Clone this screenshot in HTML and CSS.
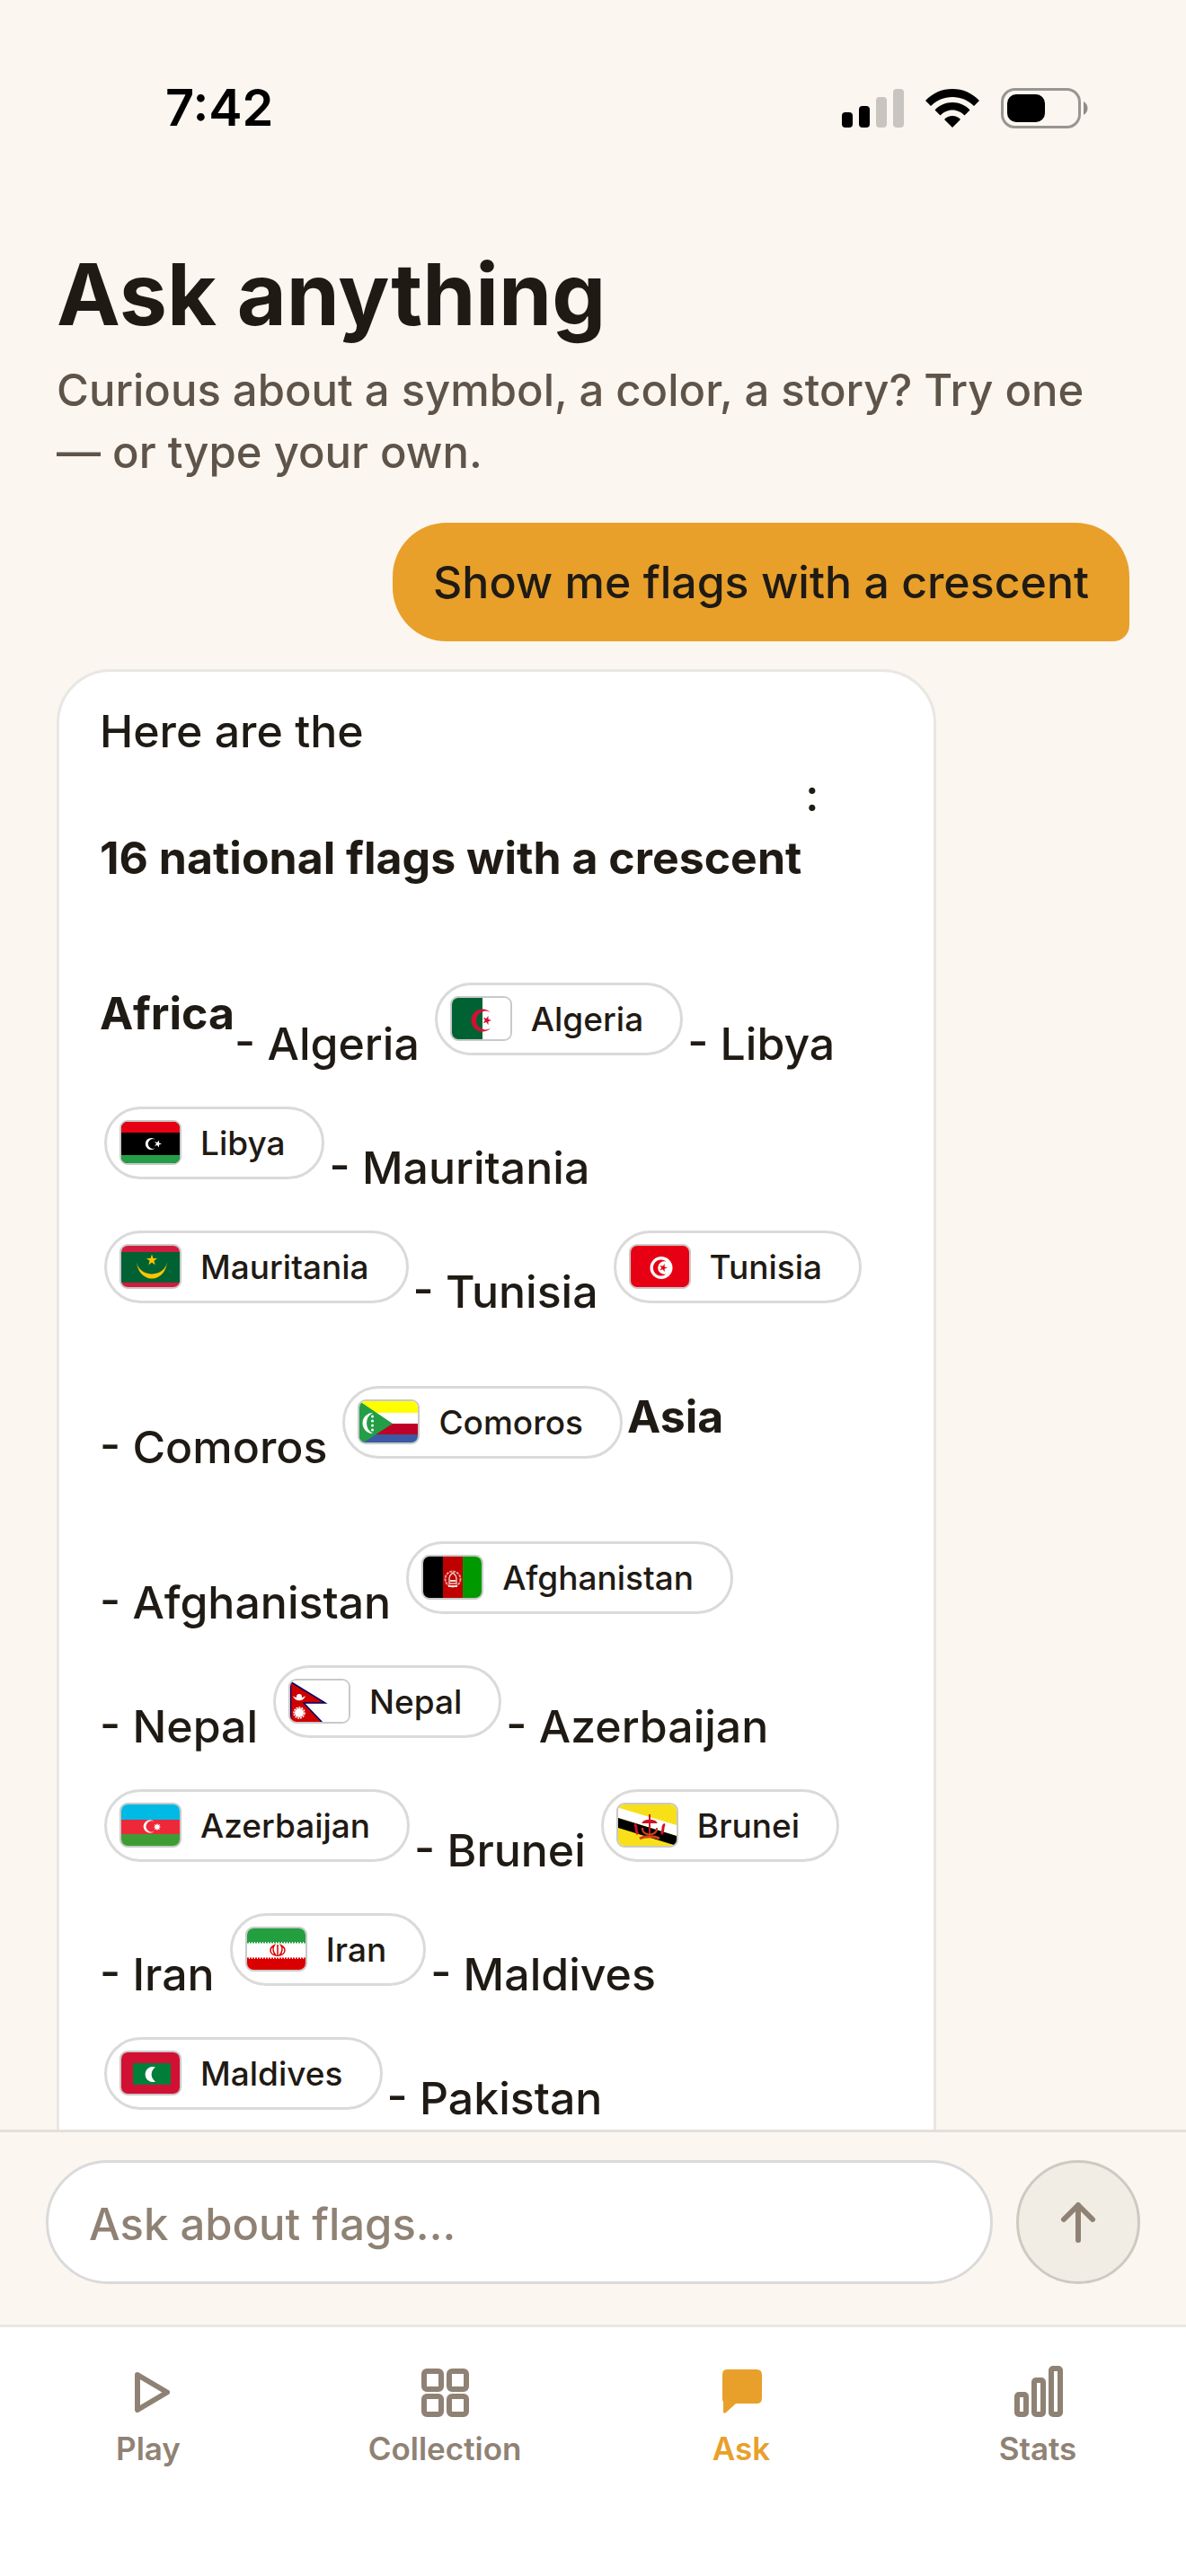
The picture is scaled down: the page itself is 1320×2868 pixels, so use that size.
FILE: index.html
```html
<!DOCTYPE html>
<html lang="en">
<head>
    <meta charset="UTF-8">
    <meta name="viewport" content="width=device-width, initial-scale=1.0">
    <title>Ask anything</title>
    <link rel="stylesheet" href="styles.css">
</head>
<body>

<div class="status-bar">
    <span class="time">7:42</span>
    <div class="status-icons">
        <svg width="69" height="44" viewBox="0 0 69 44">
            <rect x="0" y="26" width="12" height="17" rx="4"/>
            <rect x="19" y="19" width="12" height="24" rx="4"/>
            <rect x="38" y="9" width="12" height="34" rx="4" opacity="0.2"/>
            <rect x="57" y="0" width="12" height="43" rx="4" opacity="0.2"/>
        </svg>
        <svg width="60" height="44" viewBox="0 0 60 44">
            <path d="M30 0C18.500 0 8 4.500 0 13L6 19C12.500 12.500 21 9 30 9C39 9 47.500 12.500 54 19L60 13C52 4.500 41.500 0 30 0Z"/>
            <path d="M30 15C22.500 15 15.500 18 10.500 23.500L16.500 29.500C20 26 24.700 23.500 30 23.500C35.300 23.500 40 26 43.500 29.500L49.500 23.500C44.500 18 37.500 15 30 15Z"/>
            <path d="M30 30C26.500 30 23.500 31.500 21 34L30 43L39 34C36.500 31.500 33.500 30 30 30Z"/>
        </svg>
        <svg width="98" height="45" viewBox="0 0 98 45">
            <rect x="1.500" y="1.500" width="86" height="42" rx="14" fill="none" stroke="#989690" stroke-width="3"/>
            <rect x="7" y="7" width="42" height="31" rx="10"/>
            <path d="M92 15C98 18 98 27 92 30Z" fill="#8e8c88"/>
        </svg>
    </div>
</div>

<main class="chat">
    <h1>Ask anything</h1>
    <p class="subtitle">Curious about a symbol, a color, a story? Try one — or type your own.</p>

    <div class="question">Show me flags with a crescent</div>

    <div class="answer">
        <p class="intro">Here are the</p>
        <div class="row summary">
            <strong>16 national flags with a crescent</strong>
            <span class="colon">:</span>
        </div>

        <div class="row">
            <strong>Africa</strong>
            <span class="entry">- Algeria</span>
            <button class="pill" type="button">
                <svg class="flag" viewBox="0 0 65 46">
                    <rect width="65" height="46" fill="#fff"/>
                    <rect width="34" height="46" fill="#006233"/>
                    <path d="M43 16.300A12.500 12.500 0 1 0 43 33.700A10.400 10.400 0 1 1 43 16.300Z" fill="#d21034"/>
                    <path d="M44 25L40.500 26.200L40.500 29.900L38.200 27L34.700 28.200L36.800 25L34.700 21.800L38.200 23L40.500 20.100L40.500 23.800Z" fill="#d21034"/>
                </svg>
                Algeria
            </button>
            <span class="entry">- Libya</span>
        </div>

        <div class="row">
            <button class="pill" type="button">
                <svg class="flag" viewBox="0 0 65 46">
                    <rect width="65" height="46" fill="#000"/>
                    <rect width="65" height="12" fill="#e70013"/>
                    <rect y="37" width="65" height="9" fill="#239e46"/>
                    <path d="M38 20A6.500 6.500 0 1 0 38 29A5.300 5.300 0 1 1 38 20Z" fill="#fff"/>
                    <path d="M45 24.500L42 25.500L42 28.500L40 26L37 27L39 24.500L37 22L40 23L42 20.500L42 23.500Z" fill="#fff"/>
                </svg>
                Libya
            </button>
            <span class="entry">- Mauritania</span>
        </div>

        <div class="row">
            <button class="pill" type="button">
                <svg class="flag" viewBox="0 0 65 46">
                    <rect width="65" height="46" fill="#d01c3f"/>
                    <rect y="7" width="65" height="34" fill="#006233"/>
                    <path d="M17 16.500A17 20 0 0 0 51 16.500A17 15 0 0 1 17 16.500Z" fill="#ffc400"/>
                    <path d="M34 9.500L35.500 14L40 14L36.400 16.800L37.700 21.200L34 18.600L30.300 21.200L31.600 16.800L28 14L32.500 14Z" fill="#ffc400"/>
                </svg>
                Mauritania
            </button>
            <span class="entry">- Tunisia</span>
            <button class="pill" type="button">
                <svg class="flag" viewBox="0 0 65 46">
                    <rect width="65" height="46" fill="#e70013"/>
                    <circle cx="34" cy="24.500" r="12.500" fill="#fff"/>
                    <path d="M39.500 17.500A9 9 0 1 0 39.500 31.500A7.300 7.300 0 1 1 39.500 17.500Z" fill="#e70013"/>
                    <path d="M41 24.500L37.700 25.600L37.700 29L35.600 26.200L32.300 27.300L34.300 24.500L32.300 21.700L35.600 22.800L37.700 20L37.700 23.400Z" fill="#e70013"/>
                </svg>
                Tunisia
            </button>
        </div>

        <div class="row tall">
            <span class="entry">- Comoros</span>
            <button class="pill" type="button">
                <svg class="flag" viewBox="0 0 65 46">
                    <rect width="65" height="13" fill="#ff0"/>
                    <rect y="13" width="65" height="12" fill="#fff"/>
                    <rect y="25" width="65" height="12" fill="#be0027"/>
                    <rect y="37" width="65" height="9" fill="#3b5aa3"/>
                    <path d="M0 0L37 25L0 49Z" fill="#239e46"/>
                    <path d="M15 13A11.500 11.500 0 0 0 15 36A13 13 0 0 1 15 13Z" fill="#fff"/>
                    <g fill="#fff">
                        <circle cx="14.500" cy="17" r="1.500"/>
                        <circle cx="14.500" cy="22" r="1.500"/>
                        <circle cx="14.500" cy="27" r="1.500"/>
                        <circle cx="14.500" cy="32" r="1.500"/>
                    </g>
                </svg>
                Comoros
            </button>
            <strong>Asia</strong>
        </div>

        <div class="row">
            <span class="entry">- Afghanistan</span>
            <button class="pill" type="button">
                <svg class="flag" viewBox="0 0 65 46">
                    <rect width="22" height="46" fill="#000"/>
                    <rect x="22" width="22" height="46" fill="#bf0000"/>
                    <rect x="44" width="21" height="46" fill="#009900"/>
                    <circle cx="33" cy="25" r="8.500" fill="none" stroke="#e5a09a" stroke-width="2" stroke-dasharray="3 1"/>
                    <path d="M29 30V24C29 21 31 20 33 18C35 20 37 21 37 24V30Z" fill="none" stroke="#f0c8c4" stroke-width="1.500"/>
                    <path d="M30 27H36M28 33H38" stroke="#f5dcd9" stroke-width="2"/>
                </svg>
                Afghanistan
            </button>
        </div>

        <div class="row">
            <span class="entry">- Nepal</span>
            <button class="pill" type="button">
                <svg class="flag" viewBox="0 0 65 46">
                    <rect width="65" height="46" fill="#fff"/>
                    <path d="M0.500 1.500L39 25H15L36 47H0.500Z" fill="#ce0000" stroke="#000063" stroke-width="1.500"/>
                    <path d="M3 17C5 24 15 24 17 17C14 20 6 20 3 17Z" fill="#fff"/>
                    <circle cx="10" cy="18" r="3" fill="#fff"/>
                    <circle cx="10" cy="36" r="5" fill="#fff"/>
                    <circle cx="10" cy="36" r="6" fill="none" stroke="#fff" stroke-width="1.500" stroke-dasharray="2 1"/>
                </svg>
                Nepal
            </button>
            <span class="entry">- Azerbaijan</span>
        </div>

        <div class="row">
            <button class="pill" type="button">
                <svg class="flag" viewBox="0 0 65 46">
                    <rect width="65" height="17" fill="#00b9e4"/>
                    <rect y="17" width="65" height="16" fill="#ed2939"/>
                    <rect y="33" width="65" height="13" fill="#3f9c35"/>
                    <path d="M37 19.500A7.200 7.200 0 1 0 37 29.500A6 6 0 1 1 37 19.500Z" fill="#fff"/>
                    <path d="M40 21L41 23L43.200 22L42.200 24.200L44 25L42 26L43 28.200L41 27.200L40 29L39 27.200L36.800 28.200L37.800 26L36 25L37.800 24.200L36.800 22L39 23Z" fill="#fff"/>
                </svg>
                Azerbaijan
            </button>
            <span class="entry">- Brunei</span>
            <button class="pill" type="button">
                <svg class="flag" viewBox="0 0 65 46">
                    <rect width="65" height="46" fill="#f7e017"/>
                    <path d="M0 3.500L65 23V35L0 15Z" fill="#fff"/>
                    <path d="M0 15L65 35V46L0 26Z" fill="#000"/>
                    <g fill="none" stroke="#cf1126" stroke-width="2">
                        <path d="M35 11V35"/>
                        <path d="M28 20C30 17 40 17 42 20Z" fill="#cf1126"/>
                        <path d="M27 26C26 36 44 36 43 26" stroke="#d2401c"/>
                        <path d="M18 22C22 24 18 28 22 33M52 22C48 24 52 28 48 33" stroke-width="3"/>
                        <path d="M24 38C29 35 41 35 46 38" stroke="#d2401c" stroke-width="3"/>
                    </g>
                </svg>
                Brunei
            </button>
        </div>

        <div class="row">
            <span class="entry">- Iran</span>
            <button class="pill" type="button">
                <svg class="flag" viewBox="0 0 65 46">
                    <rect width="65" height="46" fill="#fff"/>
                    <rect width="65" height="15" fill="#239f40"/>
                    <rect y="34" width="65" height="12" fill="#da0000"/>
                    <path d="M0 15.500H65" stroke="#239f40" stroke-width="2" stroke-dasharray="2 1"/>
                    <path d="M0 33.500H65" stroke="#da0000" stroke-width="2" stroke-dasharray="2 1"/>
                    <path d="M34 18V31M30 19C24 22 25 29 32 30C29 27 28 22 30 19ZM38 19C44 22 43 29 36 30C39 27 40 22 38 19Z" fill="none" stroke="#da0000" stroke-width="1.500"/>
                </svg>
                Iran
            </button>
            <span class="entry">- Maldives</span>
        </div>

        <div class="row">
            <button class="pill" type="button">
                <svg class="flag" viewBox="0 0 65 46">
                    <rect width="65" height="46" fill="#d21034"/>
                    <rect x="13" y="12" width="42" height="24" fill="#007e3a"/>
                    <path d="M38 16.500A8.500 8.500 0 1 0 38 32.500A9.500 9.500 0 0 1 38 16.500Z" fill="#fff"/>
                </svg>
                Maldives
            </button>
            <span class="entry">- Pakistan</span>
        </div>
    </div>
</main>

<form class="composer">
    <input type="text" id="message" aria-label="Your question" placeholder="Ask about flags…">
    <button class="send" type="submit" aria-label="Send">
        <svg width="60" height="60" viewBox="0 0 60 60">
            <path d="M30 50V11M14 27L30 11L46 27"/>
        </svg>
    </button>
</form>

<nav class="tabs">
    <a href="#play">
        <svg width="60" height="60" viewBox="0 0 60 60"><path d="M18 10L51 29.500L18 49Z"/></svg>
        Play
    </a>
    <a href="#collection">
        <svg width="60" height="60" viewBox="0 0 60 60">
            <rect x="7" y="6" width="19" height="20" rx="3"/>
            <rect x="35" y="6" width="19" height="20" rx="3"/>
            <rect x="7" y="34" width="19" height="20" rx="3"/>
            <rect x="35" y="34" width="19" height="20" rx="3"/>
        </svg>
        Collection
    </a>
    <a class="active" href="#ask">
        <svg width="60" height="60" viewBox="0 0 60 60">
            <path d="M14 4H47Q53 4 53 10V36Q53 42 47 42H24L13 52Q10 54 10 51V40Q9 39 9 36V10Q9 4 14 4Z"/>
        </svg>
        Ask
    </a>
    <a href="#stats">
        <svg width="60" height="60" viewBox="0 0 60 60">
            <rect x="7" y="32" width="10" height="22" rx="2"/>
            <rect x="26" y="16" width="10" height="38" rx="2"/>
            <rect x="45" y="3" width="10" height="51" rx="2"/>
        </svg>
        Stats
    </a>
</nav>

</body>
</html>
```

FILE: styles.css
```css
* {
    box-sizing: border-box;
}
body {
    margin: 0;
    height: 100vh;
    display: flex;
    flex-direction: column;
    background: #fbf6ef;
    color: #1f1a14;
    font-family: Inter, "Liberation Sans", sans-serif;
    font-size: 50px;
    font-weight: 500;
    line-height: 69px;
}
button, input {
    font: inherit;
    color: inherit;
}

/* status bar */
.status-bar {
    flex: none;
    display: flex;
    justify-content: space-between;
    align-items: center;
    padding: 86px 108px 86px 184px;
    color: #000;
}
.time {
    font-size: 56px;
    font-weight: 600;
}
.status-icons {
    display: flex;
    align-items: center;
    gap: 24px;
}

/* conversation */
.chat {
    flex: 1;
    min-height: 0;
    overflow: hidden;
    padding: 22px 63px 0;
    display: flex;
    flex-direction: column;
}
h1 {
    flex: none;
    margin: 0 0 8px;
    font-size: 95px;
    font-weight: 700;
    line-height: 129px;
}
.subtitle {
    margin: 0;
    color: #5f544a;
    font-size: 49px;
}
.question {
    flex: none;
    align-self: flex-end;
    margin-top: 44px;
    padding: 32px 45px 31px;
    background: #e8a02b;
    border-radius: 60px 60px 18px 60px;
}
.answer {
    flex: none;
    width: 82%;
    margin-top: 31px;
    padding: 32px 45px 90px;
    background: #fff;
    border: 3px solid #e8e7e4;
    border-radius: 60px;
}
.intro {
    margin: 0 0 2px;
}
.row {
    display: flex;
    align-items: center;
    min-height: 138px;
    white-space: nowrap;
}
.row strong {
    font-weight: 700;
}
.summary, .tall {
    min-height: 208px;
}
.colon {
    align-self: flex-start;
    padding-left: 4px;
}
.entry {
    padding: 69px 12px 0 0;
}
.pill {
    display: flex;
    align-items: center;
    gap: 21px;
    height: 81px;
    margin: 12px 5px 0;
    padding: 0 41px 0 14px;
    background: #fff;
    border: 3px solid #dadada;
    border-radius: 41px;
    font-size: 37px;
}
.flag {
    box-sizing: content-box;
    width: 65px;
    height: 46px;
    border: 2px solid #c9c9c9;
    border-radius: 9px;
}

/* message box */
.composer {
    flex: none;
    display: flex;
    gap: 26px;
    padding: 31px 51px 45px;
    border-top: 3px solid #e3e0d8;
}
.composer input {
    flex: 1;
    min-width: 0;
    height: 138px;
    padding: 4px 45px 0;
    background: #fff;
    border: 3px solid #dadada;
    border-radius: 69px;
    font-size: 49px;
}
.composer input::placeholder {
    color: #8f8274;
    opacity: 1;
}
.send {
    width: 138px;
    height: 138px;
    padding: 0;
    display: flex;
    align-items: center;
    justify-content: center;
    background: #f2ede4;
    border: 3px solid #cfcac1;
    border-radius: 50%;
}
.send svg, .tabs svg {
    fill: none;
    stroke: #8f8274;
    stroke-width: 6;
    stroke-linecap: round;
    stroke-linejoin: round;
}

/* bottom tabs */
.tabs {
    flex: none;
    display: flex;
    height: 280px;
    padding-top: 43px;
    background: #fff;
    border-top: 3px solid #e8e7e4;
}
.tabs a {
    flex: 1;
    display: flex;
    flex-direction: column;
    align-items: center;
    gap: 11px;
    color: #8f8274;
    font-size: 35px;
    font-weight: 600;
    line-height: 42px;
    text-decoration: none;
}
.tabs .active {
    color: #e8a02b;
}
.tabs .active svg {
    fill: #e8a02b;
    stroke: none;
}
```
